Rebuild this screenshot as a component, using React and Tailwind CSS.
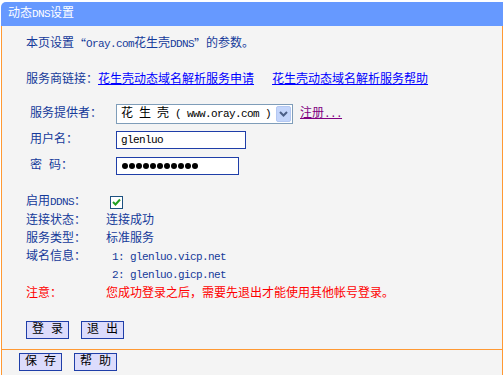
const L = ({ children }) => <span className="text-[11px] tracking-[-0.6px]">{children}</span>;

const Btn = ({ a, b }) => (
  <div className="w-[43px] h-[18px] border border-[#1f3ea8] bg-[#dcdcfc] text-black flex items-center justify-center leading-none">
    {a}
    <span className="inline-block w-[7px]" />
    {b}
  </div>
);

const Dots = () => (
  <div className="flex items-center gap-[1px]">
    {Array.from({ length: 11 }).map((_, i) => (
      <span key={i} className="w-[6px] h-[6px] rounded-full bg-black" />
    ))}
  </div>
);

export default function App() {
  return (
    <div className="w-[503px] h-[375px] bg-white pt-[2px] pl-[1px] overflow-hidden text-[12px] leading-[18px] text-[#153a9a] font-['Liberation_Mono','Noto_Sans_CJK_SC',monospace]">
      <div className="h-[24px] bg-[#6699ff] rounded-tl-[5px] text-white pl-[7px] flex items-center">
        动态<L>DNS</L>设置
      </div>
      <div className="h-[349px] bg-[#f4f4f4] border-l border-r border-[#ff9933] flex flex-col">
        <div className="mt-[9px] h-[18px] pl-[24px] flex items-center">
          本页设置<span className="inline-block w-[12px] text-right font-['Noto_Sans_CJK_SC']">“</span>
          <L>Oray.com</L>花生壳<L>DDNS</L>
          <span className="inline-block w-[12px] text-left font-['Noto_Sans_CJK_SC']">”</span>的参数。
        </div>
        <div className="mt-[18px] h-[18px] pl-[24px] flex items-center">
          <span>服务商链接：</span>
          <span className="text-[#0000ff] underline">花生壳动态域名解析服务申请</span>
          <span className="ml-[18px] text-[#0000ff] underline">花生壳动态域名解析服务帮助</span>
        </div>
        <div className="mt-[15px] h-[20px] pl-[28px] flex items-center">
          <span className="w-[86px] shrink-0">服务提供者：</span>
          <div className="w-[177px] h-[20px] border border-[#7f9db9] bg-white flex items-center justify-between pl-[4px] pr-px text-black">
            <span className="flex items-center">
              花<span className="inline-block w-[6px]" />生<span className="inline-block w-[6px]" />壳
              <L>&nbsp;(&nbsp;www.oray.com&nbsp;)</L>
            </span>
            <div className="w-[15px] h-[16px] rounded-[2px] bg-[#c3d5fb] border border-[#b4c8f2] flex items-center justify-center">
              <svg width="9" height="6" viewBox="0 0 9 6">
                <polyline points="1,1 4.5,4.5 8,1" fill="none" stroke="#4b5f87" strokeWidth="2" />
              </svg>
            </div>
          </div>
          <span className="ml-[7px] text-[#800080] underline flex items-center">
            注册<L>...</L>
          </span>
        </div>
        <div className="mt-[7px] h-[18px] pl-[28px] flex items-center">
          <span className="w-[86px] shrink-0">用户名：</span>
          <div className="w-[130px] h-[18px] border border-[#1f3ea8] bg-white pl-[4px] flex items-center text-black">
            <L>glenluo</L>
          </div>
        </div>
        <div className="mt-[8px] h-[18px] pl-[28px] flex items-center">
          <span className="w-[86px] shrink-0">
            密<span className="inline-block w-[7px]" />码：
          </span>
          <div className="w-[123px] h-[18px] border border-[#1f3ea8] bg-white pl-[5px] flex items-center">
            <Dots />
          </div>
        </div>
        <div className="mt-[18px] h-[18px] pl-[24px] flex items-center">
          <span className="w-[80px] shrink-0">
            启用<L>DDNS</L>：
          </span>
          <div className="ml-[4px] w-[13px] h-[13px] border border-[#1c5180] bg-white flex items-center justify-center">
            <svg width="9" height="8" viewBox="0 0 9 8">
              <polyline points="1,4 3.5,6.5 8,1.5" fill="none" stroke="#21a121" strokeWidth="2" />
            </svg>
          </div>
        </div>
        <div className="mt-[1px] h-[18px] pl-[24px] flex items-center">
          <span className="w-[80px] shrink-0">连接状态：</span>
          <span>连接成功</span>
        </div>
        <div className="h-[18px] pl-[24px] flex items-center">
          <span className="w-[80px] shrink-0">服务类型：</span>
          <span>标准服务</span>
        </div>
        <div className="h-[18px] pl-[24px] flex items-center">
          <span className="w-[80px] shrink-0">域名信息：</span>
          <L>&nbsp;1:&nbsp;glenluo.vicp.net</L>
        </div>
        <div className="h-[18px] pl-[24px] flex items-center">
          <span className="w-[80px] shrink-0"></span>
          <L>&nbsp;2:&nbsp;glenluo.gicp.net</L>
        </div>
        <div className="mt-[1px] h-[18px] pl-[24px] flex items-center text-[#ff0000]">
          <span className="w-[80px] shrink-0">注意：</span>
          <span>您成功登录之后，需要先退出才能使用其他帐号登录。</span>
        </div>
        <div className="mt-[18px] pl-[24px] flex items-center gap-[12px]">
          <Btn a="登" b="录" />
          <Btn a="退" b="出" />
        </div>
        <div className="mt-[10px] h-px bg-[#ff9933]" />
        <div className="mt-[3px] pl-[17px] flex items-center gap-[12px]">
          <Btn a="保" b="存" />
          <Btn a="帮" b="助" />
        </div>
      </div>
    </div>
  );
}
